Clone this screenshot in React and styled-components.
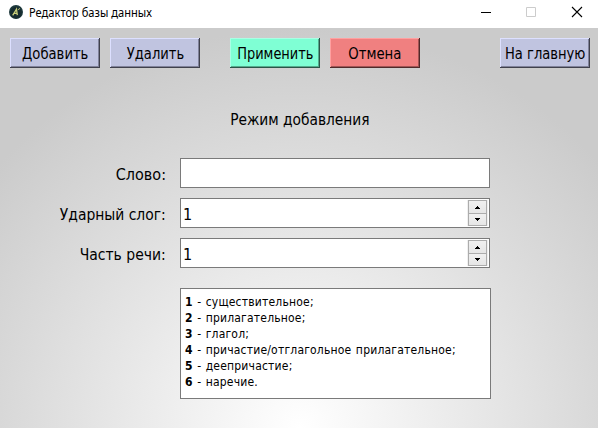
import React from "react";
import styled, { createGlobalStyle } from "styled-components";

const Global = createGlobalStyle`
  * { box-sizing: border-box; }
  body { margin: 0; }
`;

const Window = styled.div`
  width: 598px;
  height: 428px;
  display: flex;
  flex-direction: column;
  overflow: hidden;
  color: #000;
  font-family: "DejaVu Sans Condensed", "DejaVu Sans", sans-serif;
  font-stretch: condensed;
  font-size: 16px;
`;

const TitleBar = styled.header`
  height: 28px;
  flex: none;
  display: flex;
  align-items: center;
  background: #fff;
  padding-left: 9px;
  svg { display: block; }
`;

const Title = styled.div`
  flex: 1;
  padding-left: 6px;
  padding-bottom: 2px;
  font: 12px/16px "Noto Sans", sans-serif;
  white-space: nowrap;
`;

/* Narrows or widens a run of text around the given edge. */
const Fit = styled.span`
  display: inline-block;
  transform: scaleX(${(p) => p.$x});
  transform-origin: ${(p) => p.$from ?? "center"};
`;

const AppIcon = styled.svg`
  margin-bottom: 4px;
`;

const WindowControls = styled.svg`
  margin-bottom: 4px;
`;

const Body = styled.main`
  flex: 1;
  padding: 10px 8px 0 10px;
  background: radial-gradient(circle 400px at 300px 400px, #ffffff 0%, #cbcbcb 100%);
`;

const Toolbar = styled.div`
  display: flex;
  gap: 10px;
`;

const Spacer = styled.div`
  width: ${(p) => p.$width}px;
`;

const ButtonFrame = styled.button`
  width: 90px;
  height: 30px;
  display: flex;
  justify-content: center;
  padding: 1px 0 0;
  border: 0;
  color: #000;
  font: inherit;
  font-stretch: condensed;
  line-height: 30px;
  white-space: nowrap;
  background: ${(p) => p.$tone.face};
  box-shadow:
    inset -1px -1px ${(p) => p.$tone.edge},
    inset 1px 1px ${(p) => p.$tone.light},
    inset -2px -2px ${(p) => p.$tone.shade};
`;

const tones = {
  lavender: { face: "#c0c4e0", light: "#dde0ff", shade: "#80829a", edge: "#40414c" },
  mint: { face: "#7fffd4", light: "#a9ffe5", shade: "#55aa8d", edge: "#2a5547" },
  coral: { face: "#f08080", light: "#ffa0a0", shade: "#a05555", edge: "#502a2a" },
};

const Heading = styled.h1`
  margin: 42px 0 0;
  padding-right: 1px;
  font: inherit;
  font-stretch: condensed;
  line-height: 20px;
  text-align: center;
`;

const Form = styled.div`
  display: grid;
  grid-template-columns: 156px 310px;
  grid-auto-rows: 30px;
  gap: 10px 14px;
  margin-top: 28px;
`;

const Label = styled.label`
  text-align: right;
  line-height: 33px;
  white-space: nowrap;
`;

const Field = styled.div`
  display: flex;
  justify-content: space-between;
  padding: 1px;
  border: 1px solid #7a7a7a;
  background: #fff;
`;

const Value = styled.span`
  padding-left: 1px;
  line-height: 29px;
`;

const Steppers = styled.div`
  width: 21px;
  display: flex;
  flex-direction: column;
  background: #f0f0f0;
  padding: 0 1px;
`;

const Stepper = styled.div`
  height: 14px;
  display: grid;
  place-items: center;
  border: 1px solid #acacac;
  background: linear-gradient(#f0f0f0, #e6e6e6);
  & + & { height: 13px; margin-top: -1px; }
  svg { display: block; }
`;

const Legend = styled.ol`
  width: 311px;
  height: 111px;
  margin: 20px 0 0 170px;
  padding: 5px 4px;
  border: 1px solid #7a7a7a;
  background: #fff;
  list-style: none;
  font-size: 12px;
  line-height: 16px;
  letter-spacing: 0.2px;
  word-spacing: 0.8px;
  white-space: nowrap;
`;

const parts = [
  "существительное;",
  "прилагательное;",
  "глагол;",
  "причастие/отглагольное прилагательное;",
  "деепричастие;",
  "наречие.",
];

function Button({ tone, fit, children }) {
  return (
    <ButtonFrame $tone={tone}>
      <Fit $x={fit}>{children}</Fit>
    </ButtonFrame>
  );
}

function Spin() {
  return (
    <Field>
      <Value>1</Value>
      <Steppers>
        <Stepper>
          <svg width="5" height="3" shapeRendering="crispEdges"><path d="M2 0h1v1h1v1h1v1H0V2h1V1h1z" /></svg>
        </Stepper>
        <Stepper>
          <svg width="5" height="3" shapeRendering="crispEdges"><path d="M0 0h5v1H4v1H3v1H2V2H1V1H0z" /></svg>
        </Stepper>
      </Steppers>
    </Field>
  );
}

export default function App() {
  return (
    <Window>
      <Global />
      <TitleBar>
        <AppIcon width="14" height="14" viewBox="0 0 14 14">
          <circle cx="7" cy="7" r="7" fill="#1f3a3d" />
          <circle cx="7" cy="7.6" r="5.8" fill="#172c30" />
          <path d="M3.7 10.3 7.5 4.2 8.3 10.2M5 8.3h3" fill="none" stroke="#c9cf7a" strokeWidth="1.3" />
          <path d="M9.4 5 10.6 3.2" stroke="#c9cf7a" />
        </AppIcon>
        <Title><Fit $x={0.925} $from="left">Редактор базы данных</Fit></Title>
        <WindowControls width="118" height="12" fill="none">
          <path d="M1 6.5h10" stroke="#000" />
          <path d="M46.5 1.5h9v9h-9z" stroke="#ccc" />
          <path d="M92 1l10 10M102 1l-10 10" stroke="#000" strokeWidth="1.1" />
        </WindowControls>
      </TitleBar>
      <Body>
        <Toolbar>
          <Button tone={tones.lavender} fit={0.915}>Добавить</Button>
          <Button tone={tones.lavender} fit={0.91}>Удалить</Button>
          <Spacer $width={10} />
          <Button tone={tones.mint} fit={0.9}>Применить</Button>
          <Button tone={tones.coral} fit={0.92}>Отмена</Button>
          <Spacer $width={60} />
          <Button tone={tones.lavender} fit={0.91}>На главную</Button>
        </Toolbar>
        <Heading><Fit $x={0.957}>Режим добавления</Fit></Heading>
        <Form>
          <Label>Слово:</Label>
          <Field />
          <Label><Fit $x={0.965} $from="right">Ударный слог:</Fit></Label>
          <Spin />
          <Label><Fit $x={0.97} $from="right">Часть речи:</Fit></Label>
          <Spin />
        </Form>
        <Legend>
          {parts.map((part, i) => (
            <li key={part}><b>{i + 1}</b> - {part}</li>
          ))}
        </Legend>
      </Body>
    </Window>
  );
}
